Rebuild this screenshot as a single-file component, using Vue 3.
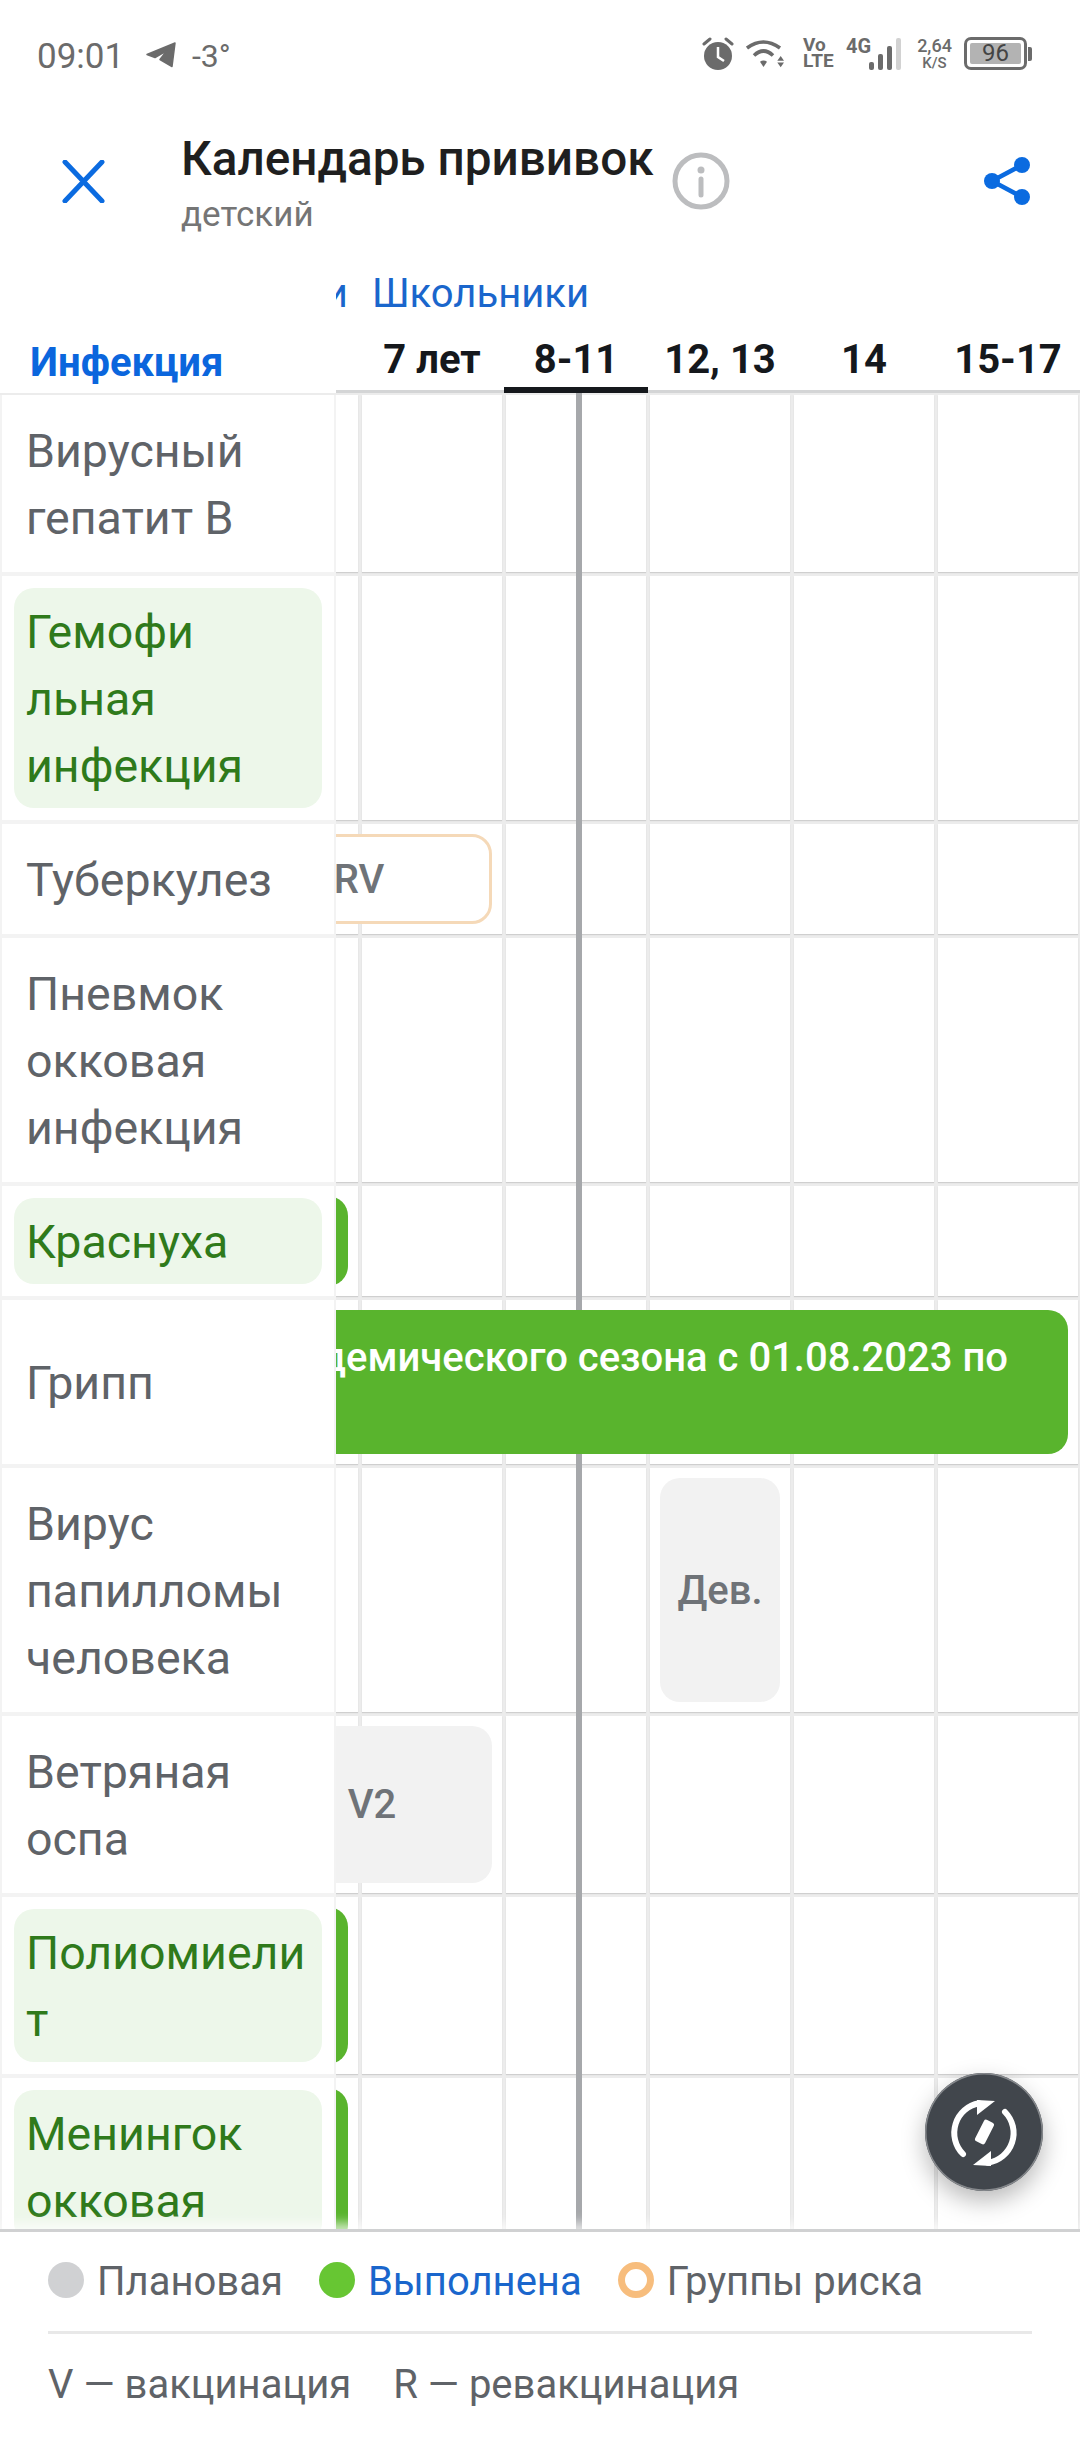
<script setup>
const ages = [
  { label: '', },
  { label: '7 лет' },
  { label: '8-11', active: true },
  { label: '12, 13' },
  { label: '14' },
  { label: '15-17' }
]
const rows = [
  { lines: ['Вирусный', 'гепатит В'] },
  { lines: ['Гемофи', 'льная', 'инфекция'], done: true },
  { lines: ['Туберкулез'], ev: { kind: 'risk', text: 'RV', col: '1 / span 2', cls: 'ev-rv' } },
  { lines: ['Пневмок', 'окковая', 'инфекция'] },
  { lines: ['Краснуха'], done: true, ev: { kind: 'green', text: '', col: '1 / span 1', cls: 'ev-edge' } },
  { lines: ['Грипп'], ev: { kind: 'flu', text: 'эпидемического сезона с 01.08.2023 по', col: '1 / span 6', cls: 'ev-flu' } },
  { lines: ['Вирус', 'папилломы', 'человека'], ev: { kind: 'plan', text: 'Дев.', col: '4 / span 1', cls: 'ev-dev' } },
  { lines: ['Ветряная', 'оспа'], ev: { kind: 'plan', text: 'V2', col: '1 / span 2', cls: 'ev-v2' } },
  { lines: ['Полиомиели', 'т'], done: true, ev: { kind: 'green', text: '', col: '1 / span 1', cls: 'ev-edge' } },
  { lines: ['Менингок', 'окковая'], done: true, ev: { kind: 'green', text: '', col: '1 / span 1', cls: 'ev-edge' } }
]
</script>

<template>
  <div class="page">
    <div class="status">
      <span class="time">09:01</span>
      <svg class="tg" width="30" height="26" viewBox="0 0 30 26"><path d="M1 12.500 29 1 26 24.500 14 17.500 21 8.500 9 15.500Z" fill="#6b6b6b" stroke="#6b6b6b" stroke-width="1.5" stroke-linejoin="round"/></svg>
      <span class="temp">-3°</span>
      <div class="status-right">
        <svg width="32" height="33" viewBox="0 0 32 33"><circle cx="16" cy="19" r="14" fill="#6b6b6b"/><path d="M16 10v10l6 4" fill="none" stroke="#fff" stroke-width="2.5"/><path d="M2 7 8 2M30 7 24 2" stroke="#6b6b6b" stroke-width="3" stroke-linecap="round"/></svg>
        <svg class="wifi" width="38" height="30" viewBox="0 0 38 30"><g fill="none" stroke="#6b6b6b" stroke-width="3.600"><path d="M1 9Q17.300-3 34 9"/><path d="M8 16.500Q17.500 7.500 27 16.500"/></g><path d="M14 22.700C16 21 19 21 21 22.700L17.500 28Z" fill="#6b6b6b"/><path d="M34.700 17 31.300 21.700H38ZM34.700 28.300 31.300 23.500H38Z" fill="#6b6b6b"/></svg>
        <div class="volte"><span>Vo</span><span>LTE</span></div>
        <span class="net">4G</span>
        <div class="bars"><i class="b1"></i><i class="b2"></i><i class="b3"></i><i class="b4"></i></div>
        <div class="speed"><span class="s1">2,64</span><span class="s2">K/S</span></div>
        <div class="battery"><div class="fill">96</div></div>
        <i class="nub"></i>
      </div>
    </div>

    <div class="topbar">
      <svg class="close" width="43" height="43" viewBox="0 0 43 43"><path d="M3 2 40 41M40 2 3 41" stroke="#0b6be0" stroke-width="5" stroke-linecap="round"/></svg>
      <div class="titles">
        <div class="title">Календарь прививок</div>
        <div class="sub">детский</div>
      </div>
      <svg class="info" width="58" height="58" viewBox="0 0 58 58"><circle cx="29" cy="29" r="26" fill="none" stroke="#bcbdbf" stroke-width="5"/><circle cx="29" cy="18" r="3.500" fill="#bcbdbf"/><path d="M29 27v16" stroke="#bcbdbf" stroke-width="5" stroke-linecap="round"/></svg>
      <svg class="share" width="48" height="50" viewBox="0 0 48 50"><g fill="#0b6be0"><circle cx="39" cy="9" r="8"/><circle cx="39" cy="41" r="8"/><circle cx="9" cy="25" r="8"/></g><path d="M39 9 9 25 39 41" fill="none" stroke="#0b6be0" stroke-width="4.500"/></svg>
    </div>

    <div class="tabs">
      <div class="tabs-in">
        <span>Дошкольники</span>
        <span>Школьники</span>
      </div>
    </div>

    <div class="head">
      <div class="head-left">Инфекция</div>
      <div class="head-track">
        <div class="grid">
          <div v-for="(a, i) in ages" :key="i" class="age" :class="{ active: a.active }">{{ a.label }}</div>
        </div>
      </div>
    </div>

    <div class="body">
      <i class="now"></i>
      <div v-for="(r, i) in rows" :key="i" class="row">
        <div class="name-wrap">
          <div class="name">
            <div class="tag" :class="{ done: r.done }">
              <div v-for="l in r.lines" :key="l">{{ l }}</div>
            </div>
          </div>
        </div>
        <div class="track">
          <div class="grid">
            <div v-for="n in 6" :key="n" class="cell" :style="{ gridColumn: n }"></div>
            <div v-if="r.ev" class="ev" :class="[r.ev.kind, r.ev.cls]" :style="{ gridColumn: r.ev.col }"><span>{{ r.ev.text }}</span></div>
          </div>
        </div>
      </div>
    </div>

    <div class="footer">
      <div class="legend">
        <i class="dot gray"></i><span class="l1">Плановая</span>
        <i class="dot green"></i><span class="l2">Выполнена</span>
        <i class="dot ring"></i><span class="l3">Группы риска</span>
      </div>
      <div class="divider"></div>
      <div class="notes">
        <span>V — вакцинация</span>
        <span>R — ревакцинация</span>
      </div>
    </div>

    <div class="fab">
      <svg width="118" height="118" viewBox="0 0 118 118">
        <g fill="none" stroke="#fff" stroke-width="6" stroke-linecap="round">
          <path d="M38 81A30 30 0 0 1 54 30.300"/>
          <path d="M80 39A30 30 0 0 1 63 89.700"/>
        </g>
        <path d="M70 28 52 27 52 42Z" fill="#fff"/>
        <path d="M48 92 66 93 66 78Z" fill="#fff"/>
        <rect x="54" y="47" width="11" height="24" rx="2.500" fill="#fff" transform="rotate(27 59.500 59)"/>
      </svg>
    </div>
  </div>
</template>

<style scoped>
.page {
  position: relative;
  width: 1080px;
  height: 2460px;
  overflow: hidden;
  background: #fff;
  font-family: Roboto, "Noto Sans", sans-serif;
}
.status {
  height: 100px;
  box-sizing: border-box;
  padding: 24px 48px 0 37px;
  display: flex;
  align-items: flex-start;
  color: #6b6b6b;
}
.time { font-size: 35px; line-height: 48px; width: 109px; margin-top: 9px; }
.tg { margin-top: 18px; }
.temp { font-size: 32px; line-height: 44px; margin-left: 16px; margin-top: 10px; }
.status-right { margin-left: auto; display: flex; align-items: flex-start; margin-top: 13px; }
.wifi { margin-left: 12px; margin-top: 2px; }
.volte { margin-left: 19px; display: flex; flex-direction: column; font-size: 19px; line-height: 16px; font-weight: 700; width: 29px; }
.net { margin-left: 14px; font-size: 20px; font-weight: 700; line-height: 18px; width: 25px; }
.bars { display: flex; align-items: flex-end; gap: 4px; height: 33px; margin-left: -2px; }
.bars i { display: block; width: 5px; background: #6b6b6b; border-radius: 2px; }
.b1 { height: 8px; }
.b2 { height: 16px; }
.b3 { height: 24px; }
.bars .b4 { height: 32px; background: #d2d2d2; }
.speed { margin-left: 15px; width: 37px; display: flex; flex-direction: column; align-items: center; font-weight: 500; }
.s1 { font-size: 18px; line-height: 18px; white-space: nowrap; }
.s2 { font-size: 15px; line-height: 16px; }
.battery { margin-left: 11px; width: 63px; height: 33px; box-sizing: border-box; border: 3px solid #6b6b6b; border-radius: 7px; padding: 3px; }
.fill { height: 100%; background: #b3b3b3; border-radius: 2px; font-size: 24px; line-height: 21px; text-align: center; color: #444; }
.nub { display: block; width: 4px; height: 14px; background: #6b6b6b; margin: 10px 0 0 1px; border-radius: 0 2px 2px 0; }

.topbar {
  height: 164px;
  box-sizing: border-box;
  padding: 0 49px 0 62px;
  display: flex;
  align-items: center;
}
.close { margin-top: -2px; }
.titles { margin-left: 76px; padding-top: 4px; }
.title { font-size: 47.700px; line-height: 56px; font-weight: 500; color: #1f1f1f; white-space: nowrap; }
.sub { font-size: 35px; line-height: 46px; color: #757575; margin-top: 5px; }
.info { margin: -2px 0 0 18px; flex: none; }
.share { margin: -2px 0 0 auto; flex: none; }

.tabs { height: 62px; margin-left: 336px; overflow: hidden; }
.tabs-in {
  display: flex;
  justify-content: flex-end;
  gap: 24px;
  padding-right: 491px;
  font-size: 40px;
  line-height: 60px;
  color: #1a66cc;
  white-space: nowrap;
}
.head { height: 67px; display: flex; }
.head-left {
  width: 336px;
  flex: none;
  box-sizing: border-box;
  padding: 12px 0 0 30px;
  font-size: 40px;
  line-height: 50px;
  font-weight: 700;
  color: #0b66dd;
}
.head-track { flex: 1; height: 67px; overflow: hidden; display: flex; }
.grid {
  flex: none;
  display: grid;
  margin-left: -120px;
  grid-template-columns: repeat(6, 144px);
  grid-template-rows: 1fr;
}
.age {
  box-sizing: border-box;
  border-bottom: 3px solid #d4d5d6;
  padding-top: 9px;
  text-align: center;
  font-size: 40px;
  line-height: 50px;
  font-weight: 700;
  color: #15181c;
  white-space: nowrap;
}
.age.active { border-bottom: 6px solid #15181c; }

.body {
  position: relative;
  height: 1836px;
  padding-top: 2px;
  box-sizing: border-box;
  overflow: hidden;
  background: #ececec;
}
.now {
  position: absolute;
  z-index: 1;
  left: 576px;
  top: 0;
  bottom: 0;
  width: 6px;
  background: #a6a8ab;
}
.row { display: flex; }
.name-wrap {
  width: 336px;
  flex: none;
  box-sizing: border-box;
  padding: 0 2px 4px;
  background: #f3f3f3;
}
.name {
  background: #fff;
  padding: 12px;
  height: 100%;
  box-sizing: border-box;
  display: flex;
  flex-direction: column;
  justify-content: center;
}
.tag {
  border-radius: 20px;
  padding: 11px 12px 8px;
  font-size: 46.500px;
  line-height: 67px;
  color: #5f6368;
  white-space: nowrap;
}
.tag.done { background: #edf7ea; color: #2f7a1b; }
.track { flex: 1; min-width: 0; overflow: hidden; display: flex; background: #ececec; padding-bottom: 4px; }
.cell { grid-row: 1; background: #fff; margin: 0 2px; box-shadow: 0 1px 1px #cfcfcf; }
.ev {
  grid-row: 1;
  position: relative;
  z-index: 2;
  margin: 10px 12px 10px 10px;
  border-radius: 20px;
  display: flex;
  align-items: center;
  justify-content: center;
  font-size: 40px;
  font-weight: 500;
  color: #6f7378;
  white-space: nowrap;
  overflow: hidden;
  box-sizing: border-box;
}
.risk { background: #fff; border: 3px solid #f5d9b8; }
.plan { background: #f2f2f2; }
.green { background: #59b42d; }
.ev-v2 { margin-left: 36px; }
.ev-dev { margin-left: 12px; margin-right: 12px; }
.flu {
  min-height: 144px;
  background: #59b42d;
  color: #fff;
  justify-content: flex-end;
  align-items: flex-start;
  padding: 27px 60px 0 0;
  line-height: 42px;
}

.footer {
  position: relative;
  z-index: 4;
  height: 231px;
  box-sizing: border-box;
  border-top: 3px solid #d0d1d2;
  background: #fff;
  padding: 30px 48px 0;
  box-shadow: 0 -6px 10px rgba(255, 255, 255, 0.7);
  color: #5f6368;
  font-size: 40px;
}
.legend { display: flex; align-items: center; height: 36px; line-height: 44px; }
.dot { display: block; width: 36px; height: 36px; border-radius: 50%; box-sizing: border-box; flex: none; }
.gray { background: #d0d1d3; }
.dot.green { background: #67c633; margin-left: 36px; }
.ring { border: 7px solid #f7bd7d; margin-left: 36px; }
.l1, .l2, .l3 { margin-left: 13px; padding-top: 3px; }
.l2 { color: #1a66cc; }
.divider { height: 3px; background: #e8e8e8; margin-top: 33px; }
.notes { margin-top: 29px; line-height: 44px; display: flex; gap: 42px; }

.fab {
  position: absolute;
  z-index: 5;
  left: 925px;
  top: 2073px;
  width: 118px;
  height: 118px;
  border-radius: 50%;
  background: #41464c;
  box-shadow: inset 0 0 0 1.500px #85888c, 0 10px 24px rgba(0, 0, 0, 0.28);
}
.fab svg { display: block; }
</style>
